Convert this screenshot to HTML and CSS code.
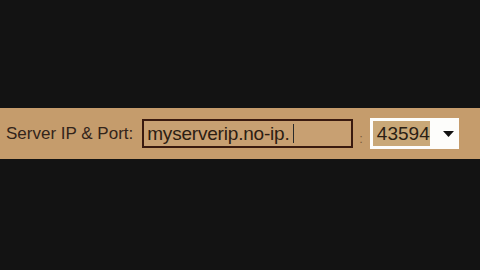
FILE: index.html
```html
<!DOCTYPE html>
<html lang="en">
<head>
    <meta charset="UTF-8">
    <title>Server IP &amp; Port</title>
    <link rel="stylesheet" href="styles.css">
</head>
<body>
    <div class="bar">
        <span class="label">Server IP &amp; Port:</span>
        <div class="host">myserverip.no-ip.<span class="caret"></span></div>
        <span class="sep">:</span>
        <div class="port">
            <span class="port-value">43594</span>
            <svg class="arrow" width="11" height="6" viewBox="0 0 11 6">
                <polygon points="0,0 11,0 5.5,6" fill="#111"/>
            </svg>
        </div>
    </div>
</body>
</html>
```

FILE: styles.css
```css
body {
    margin: 0;
    height: 100vh;
    overflow: hidden;
    background-color: #131313;
    font-family: "Liberation Sans", Arial, sans-serif;
}
.bar {
    margin-top: 108px;
    height: 51px;
    display: flex;
    align-items: center;
    padding-left: 6px;
    background-color: #c59c6c;
    color: #33241a;
}
.label {
    font-size: 17px;
    margin-right: 9px;
}
.host {
    box-sizing: border-box;
    width: 211px;
    height: 29px;
    padding-left: 3px;
    border: 2px solid #3a1a0f;
    background-color: #c8a072;
    font-size: 19px;
    line-height: 25px;
    color: #2c1d12;
    letter-spacing: -0.2px;
}
.caret {
    display: inline-block;
    width: 1px;
    height: 19px;
    margin-left: 3px;
    vertical-align: -3px;
    background-color: #2a2a2a;
}
.sep {
    margin: 10px 7px 0 6px;
    font-size: 13px;
    color: #7d5c3a;
}
.port {
    box-sizing: border-box;
    width: 89px;
    height: 31px;
    padding: 3px;
    display: flex;
    align-items: center;
    background-color: #fdfdfb;
}
.port-value {
    height: 25px;
    width: 57px;
    padding-left: 4px;
    box-sizing: border-box;
    font-size: 19px;
    line-height: 25px;
    background-color: #c9a878;
    color: #2a1e14;
}
.arrow {
    margin-left: 13px;
}
```
